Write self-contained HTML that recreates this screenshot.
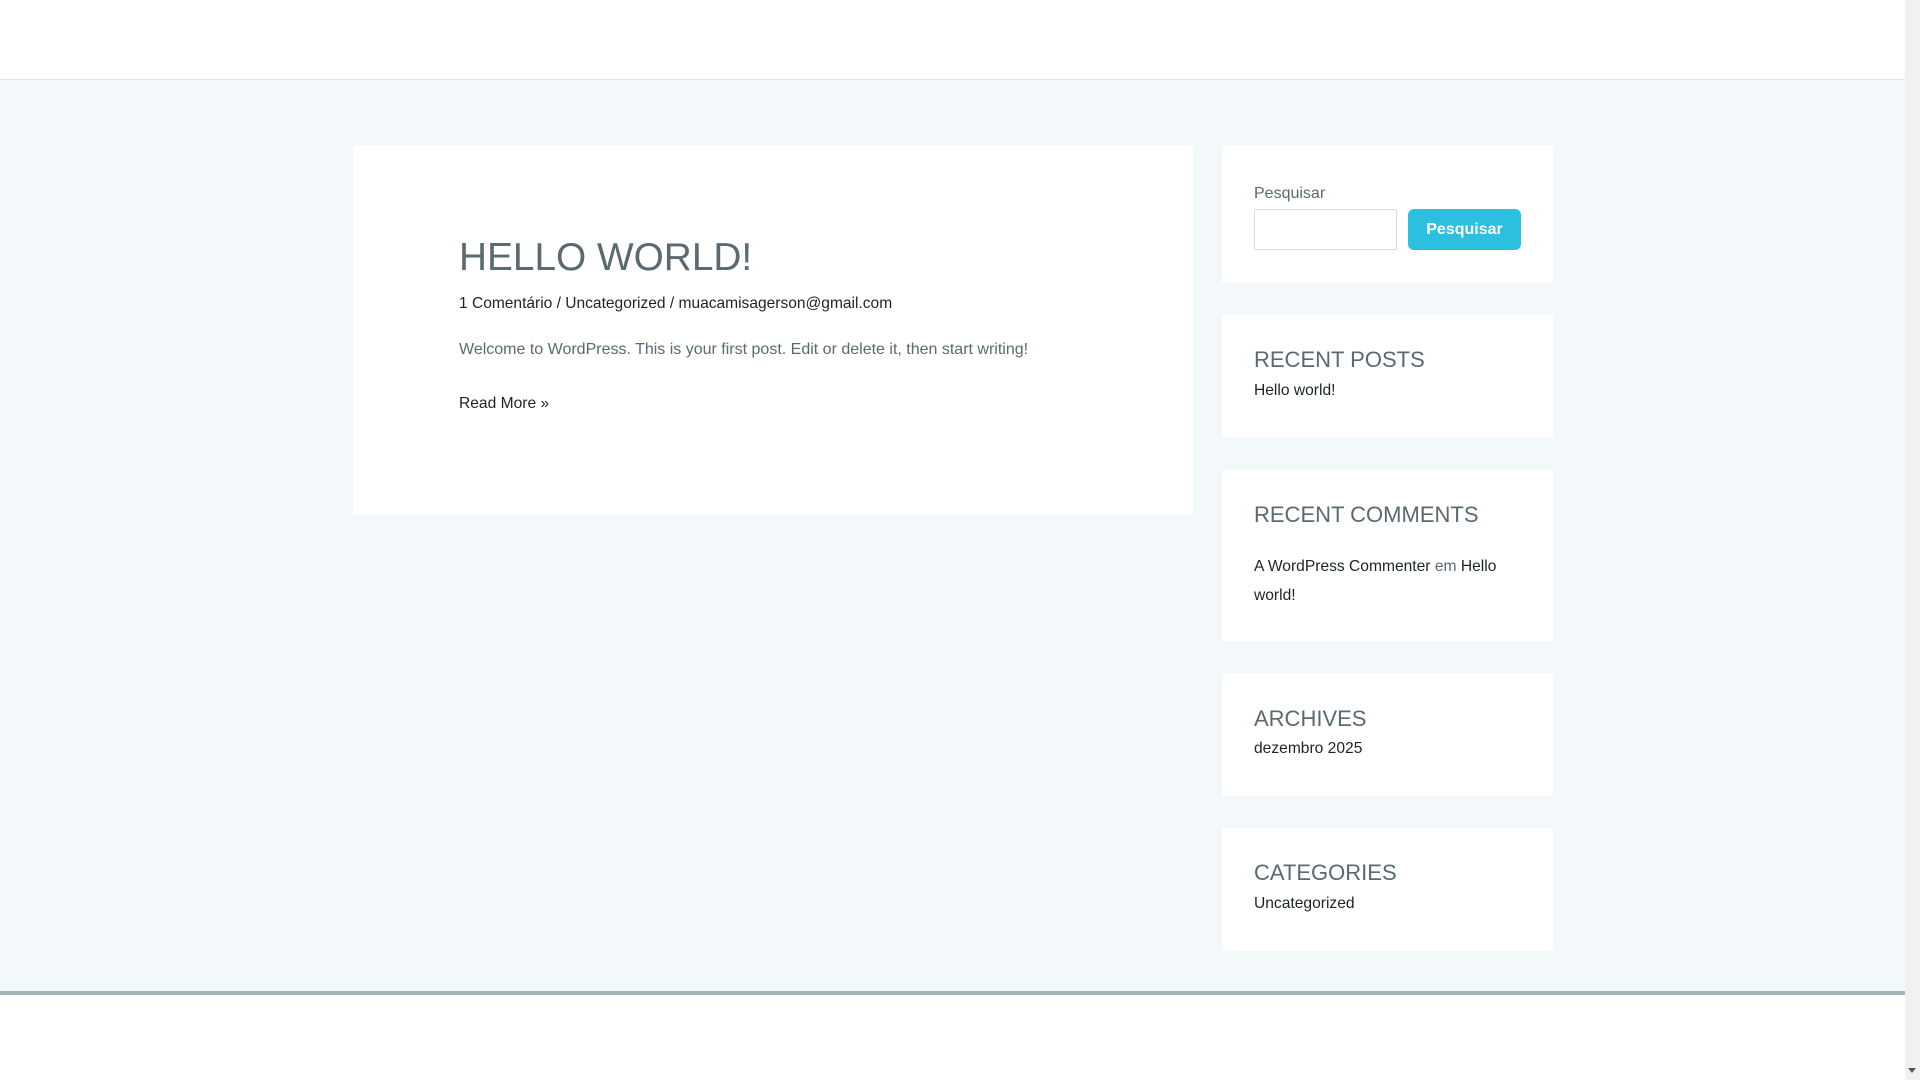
<!DOCTYPE html>
<html><head><meta charset="utf-8"><style>
*{margin:0;padding:0;box-sizing:border-box}
body{width:1920px;height:1080px;overflow:hidden;background:#f3f8fb;font-family:"Liberation Sans",Arial,sans-serif;position:relative}
.a{position:absolute;white-space:nowrap;line-height:1}
.card{position:absolute;background:#fff}
.wt{font-size:22px;color:#5a6a70}
.lk{font-size:15.6px;color:#1d2327}
</style></head><body>
<div class="card" style="left:0;top:0;width:1905px;height:80px;border-bottom:1px solid #dfe3e6"></div>
<div class="card" style="left:353px;top:145px;width:840px;height:370px"></div>
<div class="a" style="left:459px;top:239px;font-size:38.8px;color:#5a6a70">HELLO WORLD!</div>
<div class="a" style="left:459px;top:296px;font-size:15.55px;color:#1d2327">1 Comentário / Uncategorized / muacamisagerson@gmail.com</div>
<div class="a" style="left:459px;top:342px;font-size:16px;color:#5a6a70">Welcome to WordPress. This is your first post. Edit or delete it, then start writing!</div>
<div class="a" style="left:459px;top:396px;font-size:15.6px;color:#1d2327">Read More »</div>

<div class="card" style="left:1222px;top:145px;width:331px;height:138px"></div>
<div class="a" style="left:1254px;top:186px;font-size:16px;color:#5a6a70">Pesquisar</div>
<div class="card" style="left:1254px;top:209px;width:143px;height:41px;border:1px solid #d8dcde;border-radius:2px"></div>
<div class="a" style="left:1408px;top:209px;width:113px;height:41px;background:#2bbfe0;border-radius:6px;color:#fff;font-weight:bold;font-size:16px;line-height:42px;text-align:center">Pesquisar</div>

<div class="card" style="left:1222px;top:315px;width:331px;height:122px"></div>
<div class="a wt" style="left:1254px;top:349px">RECENT POSTS</div>
<div class="a lk" style="left:1254px;top:383px">Hello world!</div>

<div class="card" style="left:1222px;top:470px;width:331px;height:171px"></div>
<div class="a wt" style="left:1254px;top:504px">RECENT COMMENTS</div>
<div class="a lk" style="left:1254px;top:559px">A WordPress Commenter <span style="color:#5a6a70">em</span> Hello</div>
<div class="a lk" style="left:1254px;top:588px">world!</div>

<div class="card" style="left:1222px;top:673px;width:331px;height:123px"></div>
<div class="a wt" style="left:1254px;top:708px">ARCHIVES</div>
<div class="a lk" style="left:1254px;top:741px">dezembro 2025</div>

<div class="card" style="left:1222px;top:828px;width:331px;height:123px"></div>
<div class="a wt" style="left:1254px;top:862px">CATEGORIES</div>
<div class="a lk" style="left:1254px;top:896px">Uncategorized</div>

<div class="card" style="left:0;top:991px;width:1905px;height:89px;border-top:4px solid #a6b2b8"></div>
<div style="position:absolute;left:1905px;top:0;width:15px;height:1080px;background:#f1f1f1"></div>
<div style="position:absolute;left:1908px;top:1068px;width:0;height:0;border-left:4px solid transparent;border-right:4px solid transparent;border-top:5px solid #555"></div>
</body></html>
